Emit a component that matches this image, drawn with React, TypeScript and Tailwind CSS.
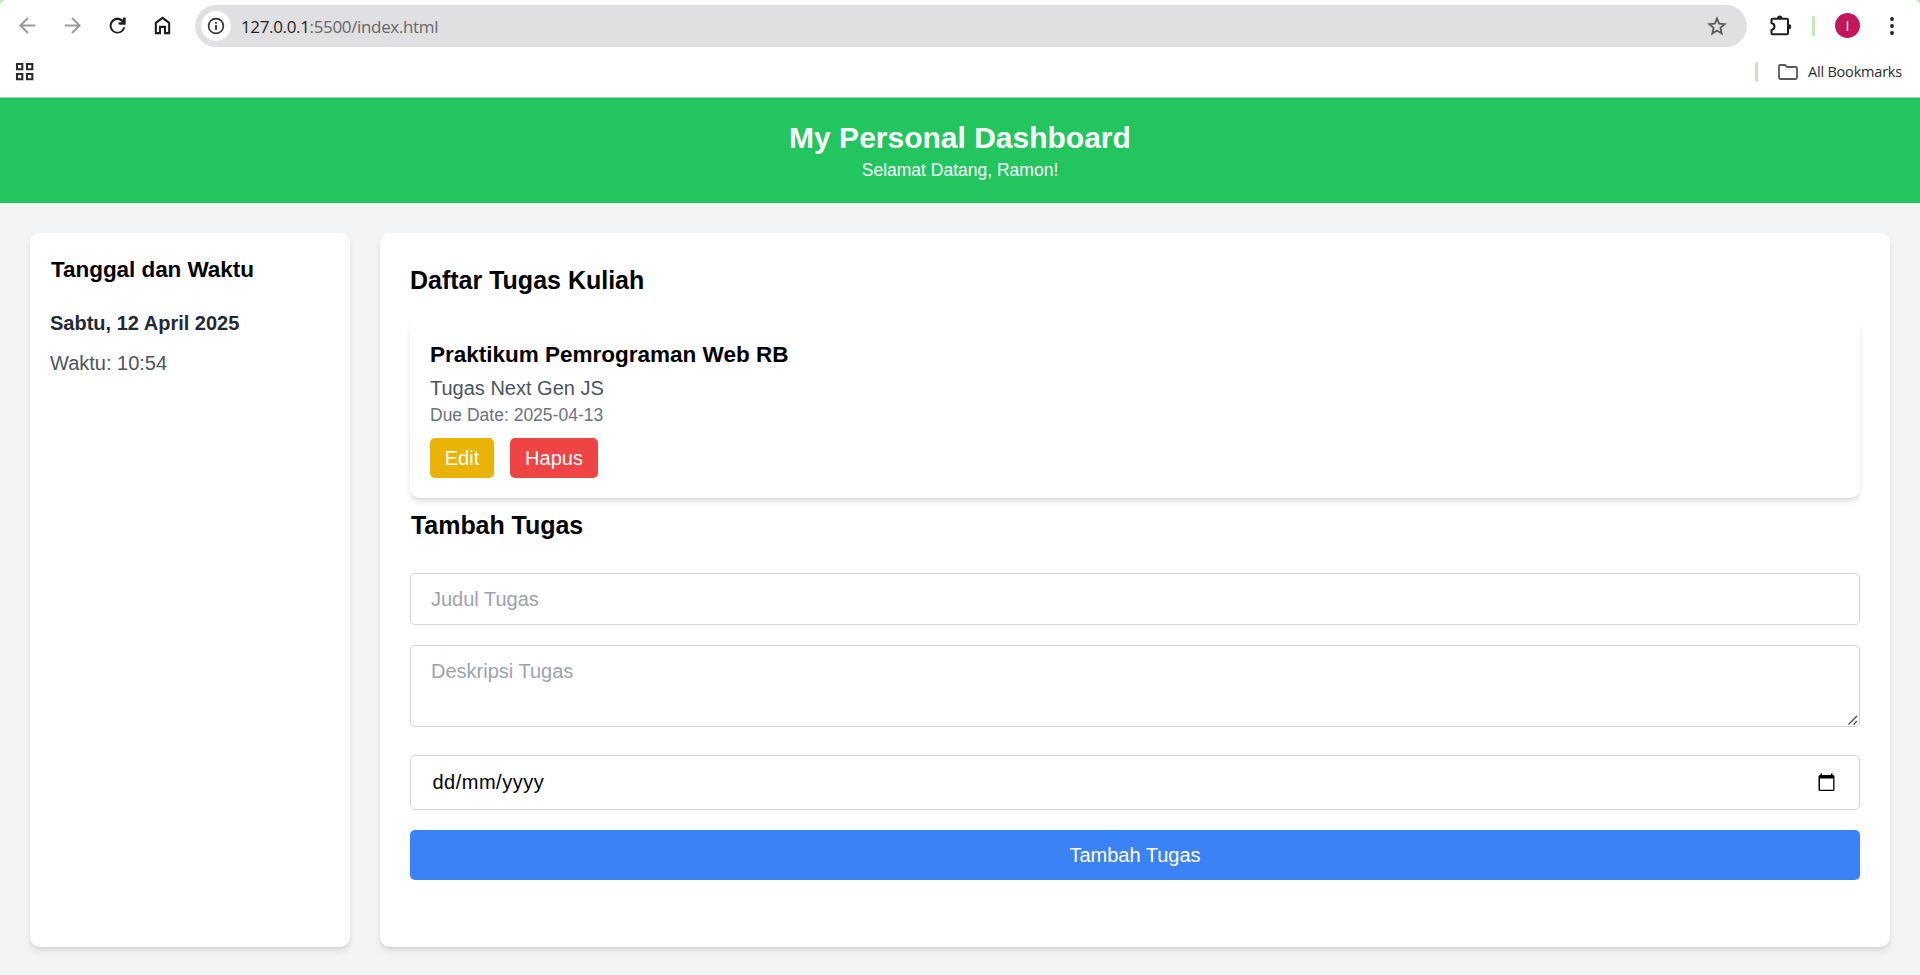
import type { ReactNode } from "react";

const cardShadow =
  "shadow-[0_5px_7.5px_-1.25px_rgba(0,0,0,0.1),0_2.5px_5px_-2.5px_rgba(0,0,0,0.1)]";

function Icon({ className, box, children }: { className: string; box: string; children: ReactNode }) {
  return (
    <svg viewBox={box} fill="none" className={`block shrink-0 ${className}`}>
      {children}
    </svg>
  );
}

function BrowserBar() {
  return (
    <div className="h-[98px] shrink-0 bg-[#c5e7bc]">
      <div className="h-[98px] rounded-t-[6px] border-b border-[#b5c9b8] bg-white font-['Open_Sans','Noto_Sans',sans-serif]">
        <div className="flex h-[51px] items-center px-[15px]">
          <Icon box="0 0 24 24" className="size-[25px] text-[#9b9b9b]">
            <path d="M19.500 12H5.400M12.400 4.800L5.200 12l7.200 7.200" stroke="currentColor" strokeWidth="1.9" />
          </Icon>
          <Icon box="0 0 24 24" className="ml-5 size-[25px] text-[#9b9b9b]">
            <path d="M4.500 12h14.100M11.600 4.800L18.800 12l-7.200 7.200" stroke="currentColor" strokeWidth="1.9" />
          </Icon>
          <Icon box="0 0 24 24" className="ml-5 size-[25px] text-[#1f1f1f]">
            <path
              fill="currentColor"
              d="M12 19.600A7.600 7.600 0 1 1 17.300 6.500V4.400H19.600V11H13V8.800H16.200A5.600 5.600 0 1 0 17.400 13.600H19.450A7.600 7.600 0 0 1 12 19.600z"
            />
            <path fill="currentColor" d="M19.600 4.400V11H14.200z" />
          </Icon>
          <Icon box="0 0 24 24" className="ml-5 size-[25px] text-[#1f1f1f]">
            <path
              d="M5.600 19.300V9.400L12 4.600l6.400 4.800V19.300h-4v-6H9.600v6z"
              stroke="currentColor"
              strokeWidth="2"
            />
          </Icon>
          <div className="ml-5 flex h-[42px] w-[1552px] items-center rounded-full bg-[#e0e0e2] pl-[6px] pr-[18px]">
            <div className="flex size-[30px] items-center justify-center rounded-full bg-white">
              <Icon box="0 0 18 18" className="size-[18px] text-[#2b2b2b]">
                <circle cx="9" cy="9" r="7.4" stroke="currentColor" strokeWidth="1.6" />
                <path d="M9 8v5M9 5v1.7" stroke="currentColor" strokeWidth="1.7" />
              </Icon>
            </div>
            <div className="ml-[10px] flex-1 pt-[2px] text-[17px] leading-6 tracking-[-0.35px] text-[#666]">
              <span className="text-[#1f1f1f]">127.0.0.1</span>:5500/index.html
            </div>
            <Icon box="0 0 24 24" className="size-6 text-[#5a5a5a]">
              <path
                d="M12 4.500l2.100 5.200 5.600.5-4.300 3.700 1.300 5.600-4.700-2.900-4.700 2.900 1.300-5.600-4.300-3.700 5.600-.5z"
                stroke="currentColor"
                strokeWidth="1.800"
              />
            </Icon>
          </div>
          <Icon box="0 0 26 24" className="ml-5 h-6 w-[26px] text-[#1f1f1f]">
            <path
              d="M5.500 4.800H20Q21 4.800 21 5.800V19.300Q21 20.300 20 20.300H5.500Q4.500 20.300 4.500 19.300V16C8.500 15 8.500 10 4.500 9V5.800Q4.500 4.800 5.500 4.800z"
              stroke="currentColor"
              strokeWidth="2"
            />
            <path d="M10 4.300a2.700 2.700 0 0 1 5.400 0zM21.500 10a2.700 2.700 0 0 1 0 5.400z" fill="currentColor" />
          </Icon>
          <div className="ml-[19px] h-5 w-[3px] rounded-full bg-[#c5e7bc]" />
          <div className="ml-5 flex size-[25px] items-center justify-center rounded-full bg-[#c2185b] text-[14px] leading-none text-white">
            I
          </div>
          <Icon box="0 0 24 24" className="ml-5 size-6 text-[#1f1f1f]">
            <circle cx="12" cy="5" r="1.900" fill="currentColor" />
            <circle cx="12" cy="12" r="1.900" fill="currentColor" />
            <circle cx="12" cy="19" r="1.900" fill="currentColor" />
          </Icon>
        </div>
        <div className="flex h-[42px] items-center pl-[15px] pr-[18px]">
          <Icon box="0 0 20 20" className="size-5 text-[#2b2b2b]">
            <path
              d="M2 2h5.300v5.300H2zM12 2h5.300v5.300H12zM2 12h5.300v5.300H2zM12 12h5.300v5.300H12z"
              stroke="currentColor"
              strokeWidth="2.100"
            />
          </Icon>
          <div className="flex-1" />
          <div className="h-5 w-[3px] rounded-full bg-[#c5e7bc]" />
          <Icon box="0 0 20 16" className="ml-5 h-4 w-5 text-[#5a5a5a]">
            <path
              d="M1 2.200Q1 1 2.200 1h4.800l2 2h8.800Q19 3 19 4.200v9.600Q19 15 17.800 15H2.200Q1 15 1 13.800z"
              stroke="currentColor"
              strokeWidth="1.8"
            />
          </Icon>
          <div className="ml-[10px] whitespace-nowrap text-[14.5px] leading-5 tracking-[-0.2px] text-[#2b2b2b]">
            All Bookmarks
          </div>
        </div>
      </div>
    </div>
  );
}

function TaskCard({ title, description, due }: { title: string; description: string; due: string }) {
  return (
    <article className={`rounded-[10px] bg-white p-5 ${cardShadow}`}>
      <h3 className="mb-px text-[22.5px] leading-[34px] font-bold">{title}</h3>
      <p className="text-[20px] leading-[30px] text-[#4b5563]">{description}</p>
      <p className="text-[17.5px] leading-[25px] text-[#6b7280]">Due Date: {due}</p>
      <div className="mt-[10px] flex gap-4 text-[20px] leading-[30px] text-white">
        <button className="h-10 w-16 rounded-[5px] bg-[#eab308]">Edit</button>
        <button className="h-10 w-[88px] rounded-[5px] bg-[#ef4444]">Hapus</button>
      </div>
    </article>
  );
}

function TaskForm() {
  const field =
    "block w-full rounded-[5px] border border-[#d1d5db] bg-white px-5 py-[10px] text-[20px] leading-[30px] placeholder:text-[#9ca3af] placeholder:opacity-100";
  return (
    <form className="mt-[30px] flex flex-col">
      <input className={`${field} h-[52px]`} placeholder="Judul Tugas" />
      <div className="relative mt-5">
        <textarea className={`${field} h-[82px] resize-none`} placeholder="Deskripsi Tugas" />
        <Icon box="0 0 10 10" className="absolute right-[2px] bottom-[2px] size-[10px]">
          <path d="M.5 9.500L9 1M5.500 9.500L9 6" stroke="#4a4a4a" strokeWidth="1.300" />
        </Icon>
      </div>
      <div className={`${field} mt-7 flex h-[55px] items-center justify-between`}>
        <span className="-mt-px pl-[1.5px] tracking-[0.5px]">dd/mm/yyyy</span>
        <Icon box="0 0 25 25" className="-mt-px size-[25px]">
          <path
            fill="#000"
            d="M6.500 5V3.500H8V5H17V3.500H18.500V5H19Q20.500 5 20.500 6.500V19.500Q20.500 21 19 21H6Q4.500 21 4.500 19.500V6.500Q4.500 5 6 5zM6 8.500V19.700H19.200V8.500z"
            fillRule="evenodd"
          />
        </Icon>
      </div>
      <button type="button" className="mt-5 h-[50px] rounded-[5px] bg-[#3b82f6] text-[20px] leading-[30px] text-white">
        Tambah Tugas
      </button>
    </form>
  );
}

export default function App() {
  return (
    <div className="flex h-[975px] w-[1920px] flex-col overflow-hidden bg-[#f3f4f6] font-['Liberation_Sans',Arial,sans-serif] text-black">
      <BrowserBar />
      <header className="shrink-0 bg-[#22c55e] p-5 text-center text-white">
        <h1 className="text-[30px] leading-10 font-bold">My Personal Dashboard</h1>
        <p className="text-[17.5px] leading-[25px]">Selamat Datang, Ramon!</p>
      </header>
      <main className="flex h-[774px] shrink-0 gap-[30px] p-[30px]">
        <aside className={`w-80 rounded-[10px] bg-white p-5 ${cardShadow}`}>
          <h2 className="pl-px text-[22.5px] leading-[34px] font-bold tracking-[-0.05px]">Tanggal dan Waktu</h2>
          <p className="mt-[21px] text-[20px] leading-[30px] font-bold text-[#1f2937]">Sabtu, 12 April 2025</p>
          <p className="mt-[10px] text-[20px] leading-[30px] text-[#4b5563]">Waktu: 10:54</p>
        </aside>
        <section className={`flex-1 rounded-[10px] bg-white p-[30px] ${cardShadow}`}>
          <h2 className="mb-5 text-[25px] leading-[35px] font-bold">Daftar Tugas Kuliah</h2>
          <TaskCard title="Praktikum Pemrograman Web RB" description="Tugas Next Gen JS" due="2025-04-13" />
          <h2 className="mt-[10px] pl-px text-[25px] leading-[35px] font-bold tracking-[-0.05px]">Tambah Tugas</h2>
          <TaskForm />
        </section>
      </main>
    </div>
  );
}
